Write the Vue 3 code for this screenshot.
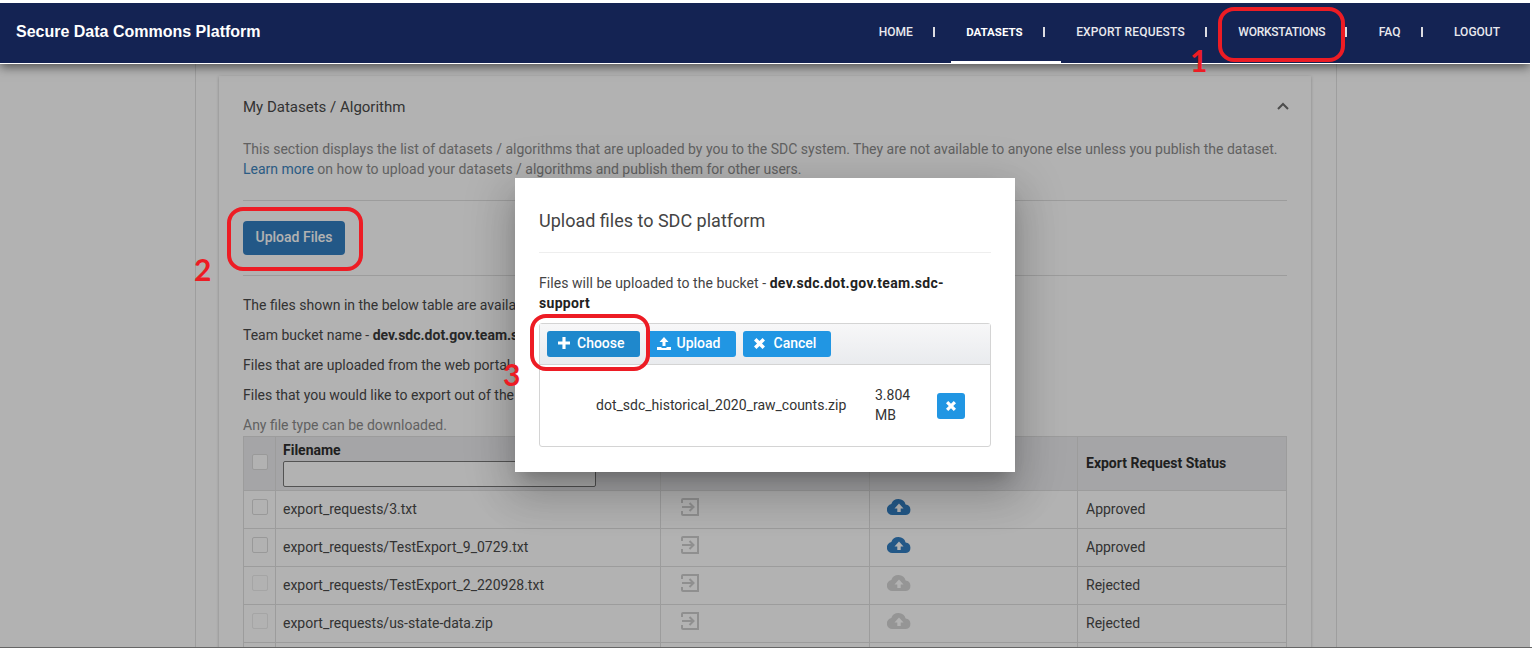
<template>
  <div class="shot">
    <div class="frame">
      <header class="navbar">
        <div class="brand">Secure Data Commons Platform</div>
        <nav class="nav">
          <div
            v-for="(item, index) in navItems"
            :key="item"
            :class="['nav-item', { active: item === 'Datasets' }]"
          >
            <span class="nav-label">{{ item }}</span>
            <span v-if="index < navItems.length - 1" class="nav-sep"></span>
          </div>
        </nav>
      </header>

      <main class="page">
        <section class="card">
          <div class="card-head">
            <span>My Datasets / Algorithm</span>
            <svg class="chevron" width="12" height="8" viewBox="0 0 12 8">
              <path d="M1 7l5-5 5 5" fill="none" stroke="#6e6e6e" stroke-width="2" />
            </svg>
          </div>
          <p class="intro">
            This section displays the list of datasets / algorithms that are uploaded by you to the SDC system. They are not available to anyone else unless you publish the dataset.
            <a class="link">Learn more</a> on how to upload your datasets / algorithms and publish them for other users.
          </p>
          <div class="upload-row">
            <button class="upload-files">Upload Files</button>
          </div>
          <div class="notes">
            <p>The files shown in the below table are available to your team.</p>
            <p>Team bucket name - <b>dev.sdc.dot.gov.team.sdc-support</b></p>
            <p>Files that are uploaded from the web portal are listed here.</p>
            <p>Files that you would like to export out of the system need approval.</p>
            <p>Any file type can be downloaded.</p>
          </div>

          <table class="files">
            <colgroup>
              <col style="width: 32px" />
              <col style="width: 385px" />
              <col style="width: 209px" />
              <col style="width: 208px" />
              <col style="width: 209px" />
            </colgroup>
            <thead>
              <tr>
                <th class="check-cell"><span class="check"></span></th>
                <th class="name-head">
                  <div>Filename</div>
                  <input type="text" class="filter" />
                </th>
                <th>Export</th>
                <th>Request</th>
                <th>Export Request Status</th>
              </tr>
            </thead>
            <tbody>
              <tr v-for="row in rows" :key="row.name">
                <td class="check-cell">
                  <span :class="['check', { off: row.status === 'Rejected' }]"></span>
                </td>
                <td class="name-cell">{{ row.name }}</td>
                <td>
                  <svg class="row-icon" width="18" height="18" viewBox="0 0 18 18" fill="none" stroke="#cdcdcd" stroke-width="2">
                    <path d="M1 5V2a1 1 0 0 1 1-1h15v16H2a1 1 0 0 1-1-1v-3" />
                    <path d="M1 9h11M8.500 5l4 4-4 4" />
                  </svg>
                </td>
                <td>
                  <svg class="row-icon cloud" width="24" height="16" viewBox="0 0 24 16">
                    <path
                      :fill="row.status === 'Approved' ? '#337fc2' : '#d6d6d6'"
                      fill-rule="evenodd"
                      d="M5.500 16A5.500 5.500 0 0 1 4.300 5.100 7.500 7.500 0 0 1 18.600 5.500 5.300 5.300 0 0 1 19 16zM12 4.500L7.500 9.500h2.800V13h3.400V9.500h2.800z"
                    />
                  </svg>
                </td>
                <td>{{ row.status }}</td>
              </tr>
              <tr>
                <td v-for="n in 5" :key="n"></td>
              </tr>
            </tbody>
          </table>
        </section>
      </main>

      <div class="overlay"></div>

      <div class="modal-wrap">
        <div class="modal">
          <h2 class="modal-title">Upload files to SDC platform</h2>
          <p class="modal-text">
            Files will be uploaded to the bucket - <b>dev.sdc.dot.gov.team.sdc-support</b>
          </p>
          <div class="uploader">
            <div class="button-bar">
              <button class="btn choose">
                <svg width="12" height="12" viewBox="0 0 13 13"><path d="M4.800 0h3.400v4.800H13v3.400H8.200V13H4.800V8.200H0V4.800h4.800z" fill="#fff" /></svg>
                Choose
              </button>
              <button class="btn">
                <svg width="14" height="13" viewBox="0 0 14 13"><path d="M7 0l4.500 5H8.500v4h-3V5H2.500zM0 10h4.500v1h5v-1H14v3H0z" fill="#fff" /></svg>
                Upload
              </button>
              <button class="btn cancel">
                <svg width="11" height="11" viewBox="0 0 12 12"><path d="M0 2.700L2.700 0 6 3.300 9.300 0 12 2.700 8.700 6 12 9.300 9.300 12 6 8.700 2.700 12 0 9.300 3.300 6z" fill="#fff" /></svg>
                Cancel
              </button>
            </div>
            <div class="file-row">
              <span class="file-name">dot_sdc_historical_2020_raw_counts.zip</span>
              <span class="file-size">3.804 MB</span>
              <button class="btn remove">
                <svg width="10" height="10" viewBox="0 0 12 12"><path d="M0 2.700L2.700 0 6 3.300 9.300 0 12 2.700 8.700 6 12 9.300 9.300 12 6 8.700 2.700 12 0 9.300 3.300 6z" fill="#fff" /></svg>
              </button>
            </div>
          </div>
        </div>
      </div>
    </div>

    <div class="mark ring-1"></div>
    <div class="mark ring-2"></div>
    <div class="mark ring-3"></div>
    <span class="step step-1">1</span>
    <span class="step step-2">2</span>
    <span class="step step-3">3</span>
  </div>
</template>

<script setup>
const navItems = ['Home', 'Datasets', 'Export Requests', 'Workstations', 'FAQ', 'Logout']

const rows = [
  { name: 'export_requests/3.txt', status: 'Approved' },
  { name: 'export_requests/TestExport_9_0729.txt', status: 'Approved' },
  { name: 'export_requests/TestExport_2_220928.txt', status: 'Rejected' },
  { name: 'export_requests/us-state-data.zip', status: 'Rejected' },
]
</script>

<style>
html,
body {
  margin: 0;
  background: #fff;
}
</style>

<style scoped>
.shot {
  position: relative;
  box-sizing: border-box;
  height: 648px;
  padding: 3px 2px 0 0;
  overflow: hidden;
  background: #fff;
  border-bottom: 1px solid #666;
  font-family: Roboto, "Liberation Sans", sans-serif;
}

.frame {
  position: relative;
  height: 100%;
  overflow: hidden;
  background: #fff;
}

.navbar {
  position: relative;
  z-index: 3;
  display: flex;
  align-items: center;
  justify-content: space-between;
  box-sizing: border-box;
  height: 61px;
  padding-left: 16px;
  background: #142353;
  border-bottom: 1px solid #fff;
  box-shadow: 0 3px 10px rgba(0, 0, 0, 0.55);
}

.brand {
  font-family: "Liberation Sans", Arial, sans-serif;
  font-size: 16px;
  font-weight: 700;
  color: #fff;
  margin-top: -2px;
}

.nav {
  display: flex;
  align-self: stretch;
  padding-right: 15px;
}

.nav-item {
  display: flex;
  align-items: center;
  padding: 0 0 0 15px;
  border-bottom: 3px solid transparent;
  margin-bottom: -1px;
  box-sizing: border-box;
}

.nav-item:last-child {
  padding-right: 15px;
}

.nav-item:nth-child(3) .nav-label {
  letter-spacing: 0.15px;
}

.nav-item:nth-child(4) .nav-label {
  letter-spacing: -0.25px;
}

.nav-item.active {
  border-bottom-color: #fff;
}

.nav-label {
  font-size: 12px;
  font-weight: 500;
  text-transform: uppercase;
  color: #e9e9ee;
}

.nav-item.active .nav-label {
  color: #fff;
  font-weight: 700;
  font-size: 11.500px;
}

.nav-sep {
  width: 2px;
  height: 10px;
  margin: 0 16.500px 0 20px;
  background: #dcdce2;
}

.page {
  box-sizing: border-box;
  width: 1142px;
  height: 590px;
  margin-left: 195px;
  padding: 12px 24px 0 23px;
  border-left: 1px solid #e2e2e2;
  border-right: 1px solid #e2e2e2;
  overflow: hidden;
}

.card {
  box-sizing: border-box;
  width: 1092px;
  padding: 0 24px;
  background: #fff;
  box-shadow: 0 1px 3px rgba(0, 0, 0, 0.25);
  font-size: 14px;
  line-height: 20px;
  color: #8c8c8c;
}

.card-head {
  display: flex;
  align-items: center;
  justify-content: space-between;
  height: 62px;
  font-size: 15px;
  color: #4a4a4a;
}

.chevron {
  margin-right: -2px;
  margin-top: -2px;
}

.intro {
  margin: 0;
  padding: 1px 0 21px;
  border-bottom: 1px solid #e0e0e0;
}

.link {
  color: #3e84bd;
}

.upload-row {
  padding: 20px 0;
  border-bottom: 1px solid #e0e0e0;
}

.upload-files {
  display: block;
  width: 102px;
  height: 34px;
  padding: 0 0 2px;
  border: 0;
  border-radius: 4px;
  background: #337fc2;
  color: #fff;
  font: 500 14px Roboto, sans-serif;
}

.notes {
  padding-top: 19px;
}

.notes p {
  margin: 0 0 10px;
  color: #4a4a4a;
}

.notes p:last-child {
  margin-bottom: 1px;
  color: #8c8c8c;
}

.notes b {
  color: #3a3a3a;
}

.files {
  width: 1043px;
  table-layout: fixed;
  border-collapse: collapse;
  color: #494949;
}

.files th,
.files td {
  box-sizing: border-box;
  padding: 0 8px 2px;
  border: 1px solid #e0e0e0;
  text-align: left;
  white-space: nowrap;
  overflow: hidden;
}

.files th {
  height: 54px;
  background: #ededef;
  font-weight: 700;
  color: #2f2f2f;
}

.files td {
  height: 38px;
}

.files .check-cell {
  padding: 0 0 2px 8px;
}

.files .name-cell {
  padding-left: 7px;
}

.check {
  display: block;
  box-sizing: border-box;
  width: 16px;
  height: 16px;
  margin-top: -4px;
  border: 1px solid #dcdcdc;
  border-radius: 2px;
  background: #fff;
}

.files th .check {
  margin-top: -2px;
  background: #fff;
}

.check.off {
  border-color: #ececec;
}

.files .name-head {
  vertical-align: top;
  padding: 4px 0 0 7px;
}

.name-head div {
  line-height: 18px;
}

.filter {
  display: block;
  box-sizing: border-box;
  width: 313px;
  height: 26px;
  margin-top: 2px;
  border: 1px solid #777;
  border-radius: 2px;
  background: #fff;
}

.row-icon {
  display: block;
  margin: -4px 0 0 12px;
}

.row-icon.cloud {
  margin-left: 9px;
}

.overlay {
  position: absolute;
  inset: 0;
  z-index: 1;
  background: rgba(0, 0, 0, 0.3);
}

.modal-wrap {
  position: absolute;
  inset: 0;
  z-index: 2;
  display: flex;
  justify-content: center;
  align-items: flex-start;
  padding-top: 175px;
  pointer-events: none;
}

.modal {
  box-sizing: border-box;
  width: 500px;
  padding: 30px 24px 25px;
  background: #fff;
  box-shadow: 0 11px 15px -7px rgba(0, 0, 0, 0.2), 0 24px 38px 3px rgba(0, 0, 0, 0.14), 0 9px 46px 8px rgba(0, 0, 0, 0.12);
  font-size: 14px;
  line-height: 20px;
  color: #444;
}

.modal-title {
  margin: 0;
  padding-bottom: 18px;
  border-bottom: 1px solid #eee;
  font-size: 18px;
  line-height: 26px;
  font-weight: 400;
  color: #444;
}

.modal-text {
  max-width: 425px;
  margin: 20px 0 10px;
  letter-spacing: 0.05px;
}

.modal-text b {
  color: #222;
  letter-spacing: 0.32px;
}

.uploader {
  border: 1px solid #d4d4d4;
  border-radius: 3px;
}

.button-bar {
  display: flex;
  gap: 7px;
  box-sizing: border-box;
  height: 41px;
  padding: 7px;
  background: linear-gradient(#f7f7f8, #e9ebee);
  border-bottom: 1px solid #d4d4d4;
}

.btn {
  display: flex;
  align-items: center;
  gap: 6px;
  box-sizing: border-box;
  height: 26px;
  padding: 0 15px 2px 10px;
  border: 0;
  border-radius: 3px;
  background: #2196e3;
  color: #fff;
  font: 500 14px Roboto, sans-serif;
}

.btn.choose {
  gap: 7px;
  padding-left: 11px;
  background: #1f88cc;
}

.btn.cancel {
  gap: 9px;
  padding-left: 11px;
}

.file-row {
  display: flex;
  align-items: center;
  height: 81px;
  padding-left: 56px;
  color: #333;
}

.file-name {
  width: 279px;
  margin-top: -2px;
}

.file-size {
  width: 62px;
  margin-top: -2px;
  padding-right: 20px;
  box-sizing: border-box;
}

.btn.remove {
  justify-content: center;
  width: 28px;
  padding: 0;
}

.mark {
  position: absolute;
  z-index: 5;
  box-sizing: border-box;
  border: 4px solid #ed1c24;
  border-radius: 16px;
}

.ring-1 {
  left: 1218px;
  top: 7px;
  width: 127px;
  height: 55px;
}

.ring-2 {
  left: 227px;
  top: 207px;
  width: 136px;
  height: 64px;
}

.ring-3 {
  left: 530px;
  top: 314px;
  width: 120px;
  height: 57px;
}

.step {
  position: absolute;
  z-index: 6;
  font-family: Lato, "Open Sans", sans-serif;
  font-size: 30px;
  line-height: 30px;
  font-weight: 700;
  color: #ed1c24;
}

.step-1 {
  left: 1190px;
  top: 45px;
}

.step-2 {
  left: 194px;
  top: 254px;
}

.step-3 {
  left: 503px;
  top: 359px;
}
</style>
